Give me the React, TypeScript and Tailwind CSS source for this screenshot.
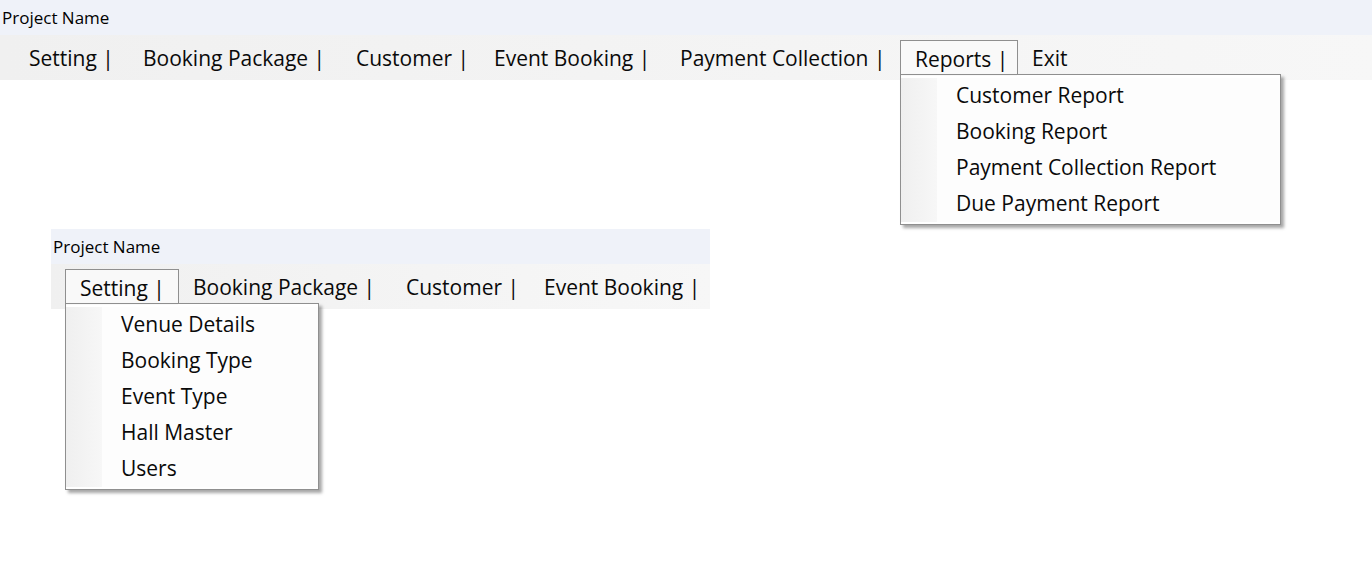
const font = { fontFamily: '"Open Sans", "Noto Sans", sans-serif' };

type Item = { label: string; width: string };

const allItems: Item[] = [
  { label: "Setting |", width: "w-[114px]" },
  { label: "Booking Package |", width: "w-[213px]" },
  { label: "Customer |", width: "w-[138px]" },
  { label: "Event Booking |", width: "w-[186px]" },
  { label: "Payment Collection |", width: "w-[234px]" },
  { label: "Reports |", width: "w-[118px]" },
  { label: "Exit", width: "w-[80px]" },
];

function Dropdown({ items, width }: { items: string[]; width: string }) {
  return (
    <div
      className={`absolute -left-px top-[33px] z-10 flex border border-[#8f8f8f] bg-white pt-[3px] pb-[2px] shadow-[3px_3px_3px_rgba(0,0,0,0.35)] ${width}`}
    >
      <div className="w-[36px] shrink-0 bg-gradient-to-r from-[#efefef] to-[#f7f7f7]" />
      <ul className="flex-1 bg-[#fdfdfd]">
        {items.map((it) => (
          <li
            key={it}
            className="flex h-[36px] items-center pl-[19px] text-[21px] text-[#0a0a0a]"
          >
            {it}
          </li>
        ))}
      </ul>
    </div>
  );
}

function MenuStrip({
  items,
  open,
  dropItems,
  dropWidth,
  stripClass,
}: {
  items: Item[];
  open: string;
  dropItems: string[];
  dropWidth: string;
  stripClass: string;
}) {
  return (
    <div className={stripClass}>
      <div className="flex h-[35px] items-center bg-[#eff2f9] pl-[2px] text-[17px] text-black">
        Project Name
      </div>
      <div className="strip flex h-[45px] bg-gradient-to-r from-[#f0f0f0] to-[#f7f7f7]">
        {items.map((it) => {
          const isOpen = it.label === open;
          return (
            <div
              key={it.label}
              className={`relative mt-[5px] flex h-[35px] shrink-0 items-center pt-[3px] text-[21px] text-[#0a0a0a] ${it.width} ${
                isOpen
                  ? "z-20 border border-b-0 border-[#8f8f8f] bg-[#f9f9f9] pl-[14px]"
                  : "pl-[14px]"
              }`}
            >
              <span className={isOpen ? "relative z-20" : ""}>{it.label}</span>
              {isOpen && (
                <>
                  <div className="absolute -bottom-px left-0 right-0 z-20 h-px bg-[#f9f9f9]" />
                  <Dropdown items={dropItems} width={dropWidth} />
                </>
              )}
            </div>
          );
        })}
      </div>
    </div>
  );
}

export default function App() {
  return (
    <div className="h-[571px] w-[1372px] overflow-hidden bg-white" style={font}>
      <MenuStrip
        items={allItems}
        open="Reports |"
        dropItems={[
          "Customer Report",
          "Booking Report",
          "Payment Collection Report",
          "Due Payment Report",
        ]}
        dropWidth="w-[381px]"
        stripClass="w-full [&_.strip]:pl-[15px]"
      />
      <div className="ml-[51px] mt-[149px]">
        <MenuStrip
          items={allItems.slice(0, 4)}
          open="Setting |"
          dropItems={[
            "Venue Details",
            "Booking Type",
            "Event Type",
            "Hall Master",
            "Users",
          ]}
          dropWidth="w-[254px]"
          stripClass="w-[659px] [&_.strip]:pl-[14px]"
        />
      </div>
    </div>
  );
}
